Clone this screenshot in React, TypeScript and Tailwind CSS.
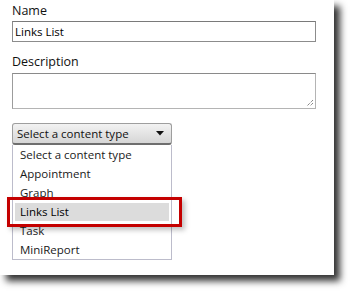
import React from "react"

const options = ["Select a content type", "Appointment", "Graph", "Links List", "Task", "MiniReport"]

export default function App() {
  return (
    <div className="w-[350px] h-[291px] bg-white overflow-hidden" style={{ fontFamily: '"Open Sans", sans-serif' }}>
      <div className="w-[334px] h-[275px] bg-white shadow-[6px_6px_7px_rgba(0,0,0,0.8)] pl-3 pt-[2px] flex flex-col">
        <label className="h-[18px] leading-[18px] text-[12.5px] text-[#111]">Name</label>
        <div className="mt-[1px] w-[304px] h-[21px] border border-[#8c8c8c] border-t-[#7a7a7a] flex items-center pl-[2px] text-[11.5px] text-black">
          Links List
        </div>
        <label className="mt-[11px] h-[18px] leading-[18px] text-[12.5px] text-[#111]">Description</label>
        <div className="mt-[2px] w-[304px] h-[36px] border border-[#b4b4b4] border-t-[#8a8a8a] border-l-[#9c9c9c] relative">
          <svg className="absolute right-[1px] bottom-[1px]" width="9" height="9" viewBox="0 0 9 9">
            <path d="M8 2 L2 8 M8 5 L5 8" stroke="#555" strokeWidth="1" strokeDasharray="1 1" />
          </svg>
        </div>
        <div className="mt-[14px] w-[160px] h-[22px] rounded-[3px] border border-[#9e9e9e] border-b-[#6e6e6e] border-b-2 bg-gradient-to-b from-[#f2f2f2] to-[#d6d6d6] flex items-center justify-between pl-[4px] pr-[7px] text-[11.5px] text-[#111]">
          <span>Select a content type</span>
          <svg width="8" height="5" viewBox="0 0 8 5">
            <path d="M0 0 H8 L4 4.5 Z" fill="#111" />
          </svg>
        </div>
        <div className="w-[160px] border border-t-0 border-[#bcbccb] flex flex-col">
          {options.map((o) => (
            <div key={o} className="h-[19px] flex items-center">
              {o === "Links List" ? (
                <div className="relative w-full h-full">
                  <div className="absolute left-[-6px] top-[-5px] w-[175px] h-[30px] border-[3px] border-[#c40000] shadow-[3px_3px_5px_rgba(0,0,0,0.25)]" />
                  <div className="mx-[2px] h-[18px] mt-[1px] bg-[#dcdcdc] flex items-center pl-[5px] text-[11.5px] text-black">{o}</div>
                </div>
              ) : (
                <span className="pl-[7px] text-[11.5px] text-[#1a1a1a]">{o}</span>
              )}
            </div>
          ))}
        </div>
      </div>
    </div>
  )
}
